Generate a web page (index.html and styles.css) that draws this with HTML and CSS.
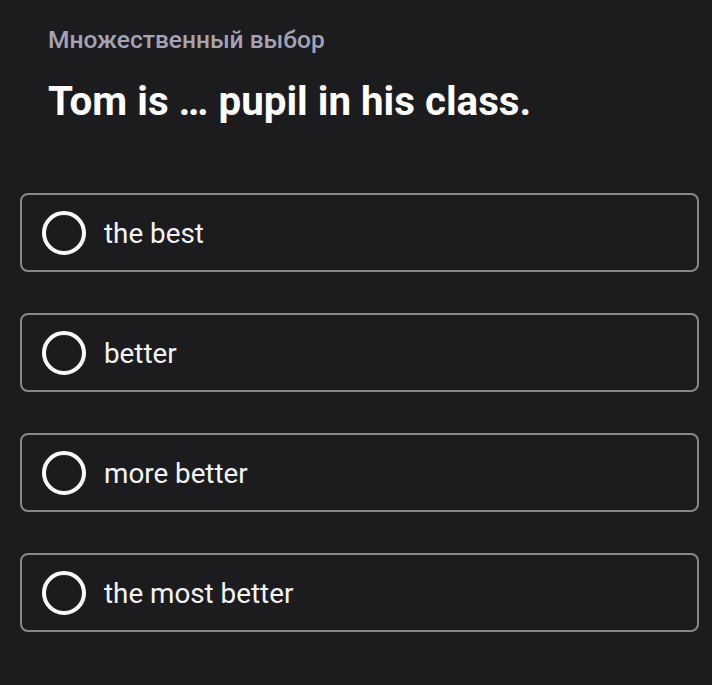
FILE: index.html
```html
<!DOCTYPE html>
<html lang="ru">
<head>
<meta charset="utf-8">
<link rel="stylesheet" href="styles.css">
</head>
<body>
<main class="quiz">
  <div class="head">
    <div class="kind">Множественный выбор</div>
    <h1 class="question">Tom is … pupil in his class.</h1>
  </div>
  <ul class="options">
    <li class="option"><span class="radio"></span><span class="label">the best</span></li>
    <li class="option"><span class="radio"></span><span class="label">better</span></li>
    <li class="option"><span class="radio"></span><span class="label">more better</span></li>
    <li class="option"><span class="radio"></span><span class="label">the most better</span></li>
  </ul>
</main>
</body>
</html>
```
FILE: styles.css
```css
html, body {
  margin: 0;
  padding: 0;
  background: #1c1c1e;
}
body {
  font-family: Roboto, "Noto Sans", sans-serif;
  color: #ffffff;
}
.quiz {
  padding: 26px 13px 0 20px;
}
.head {
  padding-left: 28px;
}
.kind {
  font-size: 24.5px;
  line-height: 28px;
  font-weight: 500;
  color: #a4a3b6;
}
.question {
  margin: 24px 0 0;
  font-size: 40.3px;
  line-height: 48px;
  font-weight: 700;
  color: #ffffff;
}
.options {
  list-style: none;
  margin: 67px 0 0;
  padding: 0;
  display: flex;
  flex-direction: column;
  gap: 41px;
}
.option {
  box-sizing: border-box;
  height: 79px;
  border: 2px solid #87878b;
  border-radius: 8px;
  display: flex;
  align-items: center;
  padding-left: 20px;
  gap: 18px;
}
.radio {
  box-sizing: border-box;
  width: 44px;
  height: 44px;
  border: 4px solid #ffffff;
  border-radius: 50%;
  flex: none;
}
.label {
  font-size: 27.8px;
  line-height: 32px;
  padding-top: 3px;
  color: #f4f4f6;
}
```
